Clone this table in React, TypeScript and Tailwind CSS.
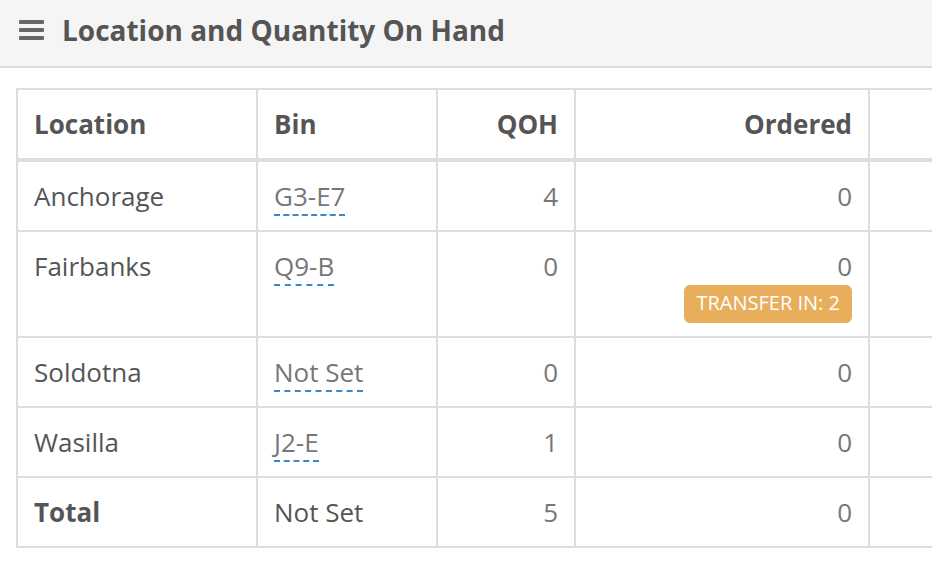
import React from 'react';

type Row = {
  location: string;
  bin: string;
  qoh: number;
  ordered: number;
  transferIn?: number;
  total?: boolean;
};

const rows: Row[] = [
  { location: 'Anchorage', bin: 'G3-E7', qoh: 4, ordered: 0 },
  { location: 'Fairbanks', bin: 'Q9-B', qoh: 0, ordered: 0, transferIn: 2 },
  { location: 'Soldotna', bin: 'Not Set', qoh: 0, ordered: 0 },
  { location: 'Wasilla', bin: 'J2-E', qoh: 1, ordered: 0 },
  { location: 'Total', bin: 'Not Set', qoh: 5, ordered: 0, total: true },
];

const cell = 'border-2 border-[#dddddd] px-[16px] py-[16px] align-top leading-[36px]';

const App: React.FC = () => {
  return (
    <div
      className="w-[932px] h-[572px] overflow-hidden bg-white text-[#555555]"
      style={{ fontFamily: '"Open Sans", "Liberation Sans", sans-serif' }}
    >
      {/* Panel heading */}
      <div className="h-[68px] bg-[#f5f5f5] border-b-2 border-[#dddddd] flex items-center pl-[19px]">
        <div className="flex flex-col gap-[4px] w-[25px] mr-[18px] mb-[6px]">
          <span className="block h-[4px] bg-[#666666] rounded-[1px]" />
          <span className="block h-[4px] bg-[#666666] rounded-[1px]" />
          <span className="block h-[4px] bg-[#666666] rounded-[1px]" />
        </div>
        <h2 className="text-[28px] leading-[36px] font-bold text-[#555555] mb-[6px]">
          Location and Quantity On Hand
        </h2>
      </div>

      {/* Table */}
      <div className="pt-[20px] pl-[16px]">
        <table className="border-collapse table-fixed w-[1000px] text-[26px]">
          <colgroup>
            <col className="w-[240px]" />
            <col className="w-[180px]" />
            <col className="w-[138px]" />
            <col className="w-[294px]" />
            <col />
          </colgroup>
          <thead>
            <tr>
              <th className={`${cell} border-b-4 text-left font-bold`}>Location</th>
              <th className={`${cell} border-b-4 text-left font-bold`}>Bin</th>
              <th className={`${cell} border-b-4 text-right font-bold`}>QOH</th>
              <th className={`${cell} border-b-4 text-right font-bold`}>Ordered</th>
              <th className={`${cell} border-b-4`}></th>
            </tr>
          </thead>
          <tbody>
            {rows.map((r) => (
              <tr key={r.location}>
                <td className={`${cell} ${r.total ? 'font-bold' : ''}`}>{r.location}</td>
                <td className={cell}>
                  {r.total ? (
                    <span className="text-[#555555]">{r.bin}</span>
                  ) : (
                    <span className="text-[#777777] border-b-2 border-dashed border-[#3a87c9]">
                      {r.bin}
                    </span>
                  )}
                </td>
                <td className={`${cell} text-right text-[#777777]`}>{r.qoh}</td>
                <td className={`${cell} text-right text-[#777777]`}>
                  <div>{r.ordered}</div>
                  {r.transferIn !== undefined && (
                    <div className="flex justify-end mt-[1px] mb-[-3px]">
                      <span className="block bg-[#e8ae5c] text-white text-[20px] leading-[26px] px-[12px] pt-[5px] pb-[7px] rounded-[6px]">
                        TRANSFER IN: {r.transferIn}
                      </span>
                    </div>
                  )}
                </td>
                <td className={cell}></td>
              </tr>
            ))}
          </tbody>
        </table>
      </div>
    </div>
  );
};

export default App;
